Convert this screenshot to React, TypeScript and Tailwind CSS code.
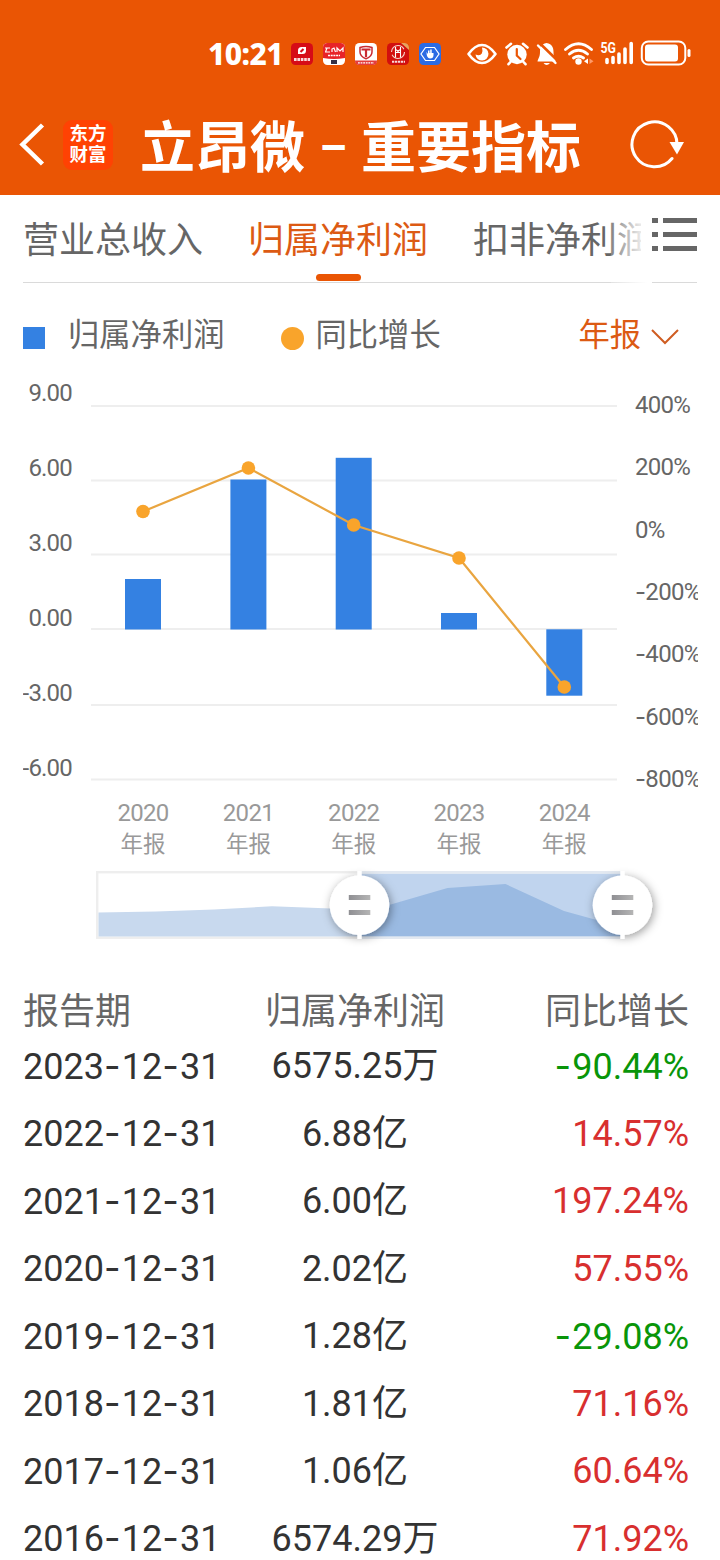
import React from 'react';

const ORANGE = '#ea5504';
const GRID = [406, 480.5, 554.5, 629, 705, 779.5];
const LEFT_TICKS = ['9.00', '6.00', '3.00', '0.00', '-3.00', '-6.00'];
const RIGHT_TICKS = ['400%', '200%', '0%', '-200%', '-400%', '-600%', '-800%'];

const BARS = [
    { year: '2020', x: 143, top: 579, bottom: 629.5, dot: 511.5 },
    { year: '2021', x: 248.4, top: 479.5, bottom: 629.5, dot: 468 },
    { year: '2022', x: 353.7, top: 457.8, bottom: 629.5, dot: 525 },
    { year: '2023', x: 459, top: 613, bottom: 629.5, dot: 558 },
    { year: '2024', x: 564.3, top: 629.3, bottom: 695.7, dot: 687 },
];

const ROWS = [
    { date: '2023-12-31', value: '6575.25万', growth: '-90.44%' },
    { date: '2022-12-31', value: '6.88亿', growth: '14.57%' },
    { date: '2021-12-31', value: '6.00亿', growth: '197.24%' },
    { date: '2020-12-31', value: '2.02亿', growth: '57.55%' },
    { date: '2019-12-31', value: '1.28亿', growth: '-29.08%' },
    { date: '2018-12-31', value: '1.81亿', growth: '71.16%' },
    { date: '2017-12-31', value: '1.06亿', growth: '60.64%' },
    { date: '2016-12-31', value: '6574.29万', growth: '71.92%' },
];

// Roboto's hyphen is too short next to the figures, so hyphens use Inter
const Num: React.FC<{ text: string }> = ({ text }) => (
    <>
        {text.split(/(-)/).map((part, i) =>
            part === '-' ? <span key={i} className="font-['Inter',sans-serif] tracking-[1.2px]">-</span> : part
        )}
    </>
);

const AppBadges = () => (
    <svg width="150" height="22" viewBox="0 0 150 22" className="ml-[9px]">
        <rect width="22" height="22" rx="4.5" fill="#d60b17" />
        <path d="M7 10V7.5Q7 4 10.5 4H15V7.5Q15 11 11.5 11H7Z" fill="#fff" />
        <path d="M9.5 9L12.5 6" stroke="#d60b17" strokeWidth="2.2" />
        <path d="M3 16.5H19" stroke="#fff" strokeWidth="3" strokeDasharray="2.6 0.8" opacity=".85" />

        <rect x="32" width="22" height="22" rx="4.5" fill="#fff" />
        <path d="M32 15V4.5A4.5 4.5 0 0 1 36.5 0H49.5A4.5 4.5 0 0 1 54 4.5V15Q43 17 32 15Z" fill="#e82328" />
        <path d="M34 5H39M34 9H39M36 5L34.5 9M41 9V6L43 5L44.5 9M46 9V5L49 8L52 5V9" stroke="#fff" strokeWidth="1.2" fill="none" />
        <path d="M37 12.5H49" stroke="#fff" strokeWidth="1.5" strokeDasharray="2 .7" />
        <path d="M40 17H46V21H40Z" fill="#343147" />

        <rect x="64" width="22" height="22" rx="4.5" fill="#fff" />
        <path d="M64 17.5H86V18A4 4 0 0 1 82 22H68A4 4 0 0 1 64 18Z" fill="#e43d3c" />
        <path d="M69 4.5Q75 2.5 81 4.5V9Q81 13.5 75 15.8Q69 13.5 69 9Z" stroke="#c92a32" strokeWidth="1.5" fill="none" />
        <path d="M70.5 6.5H79.5M75 6.5V14" stroke="#c92a32" strokeWidth="2.2" />
        <path d="M67 19.8H83" stroke="#fff" strokeWidth="1.3" strokeDasharray="1.8 .8" />

        <rect x="96" width="22" height="22" rx="4.5" fill="#d20f0e" />
        <path d="M110 0H113.5A4.5 4.5 0 0 1 118 4.5V7Z" fill="#e8a35c" />
        <circle cx="107" cy="9" r="6.5" stroke="#f6d4cb" strokeWidth="1.1" fill="none" strokeDasharray="17 3" />
        <path d="M104.5 4V14.5M109.5 4V14.5M104.5 9.5H109.5M104.5 6.5L109.5 9.5M109.5 6.5L104.5 9.5" stroke="#fff" strokeWidth="1.1" />
        <path d="M101 18.8H114" stroke="#fff" strokeWidth="2" strokeDasharray="2.3 .7" opacity=".85" />

        <rect x="128" width="22" height="22" rx="4.5" fill="#2b6be4" />
        <path d="M134.5 4.5H143.5L148 11L143.5 17.5H134.5L130 11Z" stroke="#fff" strokeWidth="1.2" fill="none" />
        <path d="M135.5 9L137 11V7.5H138.5V10H139.2V6.5H140.7V10H142.5V12Q142.5 15.5 139 15.5Q135.5 15 135.5 9Z" fill="#fff" />
    </svg>
);

const SystemIcons = () => (
    <svg width="226" height="30" viewBox="466 39 226 30" fill="none" stroke="#fff" className="ml-[25px]">
        {/* eye comfort */}
        <path d="M468.5 54Q475 45 482 45T495.500 54Q489 63 482 63T468.500 54Z" strokeWidth="2.6" strokeLinejoin="round" />
        <path d="M482 47.5A6.500 6.500 0 1 1 475.500 54.500Q480 56.500 481.800 53.500Q483 51 482 47.500Z" fill="#fff" stroke="none" />
        {/* alarm */}
        <circle cx="517" cy="54.5" r="9.7" fill="#fff" stroke="none" />
        <path d="M506.500 47.500L511 43.800M527.500 47.500L523 43.800M510.500 62L508.500 64.200M523.500 62L525.500 64.200" strokeWidth="2.6" strokeLinecap="round" />
        <path d="M516.8 49V55.500L520.500 59" stroke={ORANGE} strokeWidth="2.200" strokeLinecap="round" />
        {/* muted bell */}
        <path d="M546.500 43C541 44 540 48 540 52C540 57 538 58.500 537.500 61.500H556C555 58.500 553.500 57 553.500 52C553.500 48 552.500 44 546.500 43Z" fill="#fff" stroke="none" />
        <path d="M543.5 63H550Q546.500 67 543.500 63Z" fill="#fff" stroke="none" />
        <path d="M539 42.500L558.500 61.500" stroke={ORANGE} strokeWidth="2.600" />
        <path d="M538 45.500L555.500 63" strokeWidth="2.400" strokeLinecap="round" />
        {/* wifi */}
        <path d="M565.5 49.500Q578.500 38 591.500 49.500M569.500 54Q578.500 46.500 587.500 54M573.500 58Q578.500 54.500 583.500 58" strokeWidth="2.8" strokeLinecap="round" />
        <circle cx="578.500" cy="61.500" r="3.200" fill="#fff" stroke="none" />
        <path d="M588 58.500V64L584 61.200Z" fill="#fff" stroke="none" />
        <path d="M589.500 58.500V64L593.500 61.200Z" fill="#ff9a69" stroke="none" />
        {/* cellular */}
        <text x="600.500" y="53" fill="#fff" stroke="none" fontSize="15" fontWeight="700" textLength="15.500" lengthAdjust="spacingAndGlyphs">5G</text>
        <path d="M607 59.500V62.500M613 57.500V62.500M619 54V62.500M625 49V62.500M631.200 43.500V62.500" strokeWidth="3.600" strokeLinecap="round" />
        {/* battery */}
        <rect x="641.800" y="41.500" width="43.500" height="23" rx="6.500" strokeWidth="2" />
        <rect x="645" y="44.500" width="33" height="17" rx="3" fill="#fff" stroke="none" />
        <path d="M689 50.500V55.500" strokeWidth="3" strokeLinecap="round" />
    </svg>
);

const Header = () => (
    <header className="h-[195px] bg-[#ea5504] text-white">
        <div className="flex h-[95px] items-center pt-[13px] pl-[208px]">
            <span className="w-[74px] text-[30px] leading-[30px] font-extrabold">
                <span className="font-['Noto_Sans',sans-serif] tracking-[-0.6px]">10:21</span>
            </span>
            <AppBadges />
            <SystemIcons />
        </div>
        <div className="flex h-[100px] items-center">
            <svg width="26" height="44" viewBox="0 0 26 44" fill="none" stroke="#fff" strokeWidth="4.5" className="ml-[19px]">
                <path d="M23.500 2L3.500 21.500L23.500 41" />
            </svg>
            <div className="ml-[18px] flex h-[50px] w-[50px] flex-col items-center justify-center rounded-[9px] bg-[#ff4203] text-[18.5px] leading-[21.5px] font-bold">
                <span>东方</span>
                <span>财富</span>
            </div>
            <h1 className="mt-[6px] ml-[27px] flex w-[442px] text-[55px] leading-[80px] font-bold whitespace-pre">
                <span>立昂微</span>
                <span className="w-[56px] text-center text-[44px]">–</span>
                <span>重要指标</span>
            </h1>
            <svg width="56" height="50" viewBox="630 119 56 50" fill="none" className="-mt-[2px] ml-[48px]">
                <path d="M677 145A22.500 22.500 0 1 0 672 158.500" stroke="#fff" strokeWidth="3" strokeLinecap="round" />
                <path d="M669.500 142H684L677 154.500Z" fill="#fff" />
            </svg>
        </div>
    </header>
);

const Tabs = () => (
    <nav className="mx-[23px] flex h-[88px] text-[36px] text-[#666]">
        <div className="flex w-[630px] gap-[45px] border-b border-[#dadada] whitespace-nowrap">
            <span className="pt-[20px] leading-[52px]">营业总收入</span>
            <span className="flex flex-col items-center pt-[20px] leading-[52px] text-[#dc5a13]">
                归属净利润
                <span className="mt-[7px] h-[7px] w-[45px] shrink-0 rounded-full bg-[#ea5504]" />
            </span>
            <span className="w-[168px] shrink-0 overflow-hidden pt-[20px] leading-[52px]">扣非净利润</span>
        </div>
        {/* fade over the tab that is cut off */}
        <div className="z-10 -ml-[41px] h-full w-[36px] bg-linear-to-r from-white/20 to-white" />
        <div className="z-10 h-full w-[5px] bg-white" />
        <div className="flex w-[45px] border-b border-[#dadada] pt-[22px]">
            <svg width="45" height="35" viewBox="0 0 45 35" fill="#666">
                <path d="M0 1h6v5H0zM11 1h34v5H11zM0 15h6v5H0zM11 15h34v5H11zM0 29h6v5H0zM11 29h34v5H11z" />
            </svg>
        </div>
    </nav>
);

const Legend = () => (
    <div className="flex h-[92px] items-center px-[23px] pt-[13px] text-[31.3px] leading-[44px] text-[#666]">
        <span className="mt-[5px] h-[22px] w-[22px] bg-[#3481e2]" />
        <span className="ml-[23px]">归属净利润</span>
        <span className="mt-[5px] ml-[56px] h-[23px] w-[23px] rounded-full bg-[#f9a42b]" />
        <span className="ml-[12px]">同比增长</span>
        <span className="ml-auto text-[#dc5a13]">年报</span>
        <svg width="28" height="16" viewBox="0 0 28 16" fill="none" stroke="#cf5d22" strokeWidth="2" className="mt-[3px] mr-[18px] ml-[10px]">
            <path d="M1 1L14 14L27 1" />
        </svg>
    </div>
);

const Chart = () => (
    <svg width="675" height="485" viewBox="23 375 675 485" fontSize="24" fill="#666" className="mx-[23px] block">
        {GRID.map((y) => (
            <path key={y} d={`M91 ${y}H617`} stroke="#eee" strokeWidth="2.2" />
        ))}
        {LEFT_TICKS.map((t, i) => (
            <text key={t} x="72" y={401 + i * 75} textAnchor="end" letterSpacing="-0.8">{t}</text>
        ))}
        {RIGHT_TICKS.map((t, i) => (
            <text key={t} x="635" y={412.7 + i * 62.4} letterSpacing="-0.7">
                {t.startsWith('-') ? <tspan fontFamily="Inter">-</tspan> : null}
                {t.replace('-', '')}
            </text>
        ))}
        {BARS.map((b) => (
            <rect key={b.year} x={b.x - 18} y={b.top} width="36" height={b.bottom - b.top} fill="#3481e2" />
        ))}
        <polyline points={BARS.map((b) => `${b.x},${b.dot}`).join(' ')} fill="none" stroke="#e9a540" strokeWidth="2.2" />
        {BARS.map((b) => (
            <circle key={b.year} cx={b.x} cy={b.dot} r="6.8" fill="#f9a42b" />
        ))}
        {BARS.map((b) => (
            <g key={b.year} fill="#999" textAnchor="middle">
                <text x={b.x} y="821" letterSpacing="-0.7">{b.year}</text>
                <text x={b.x} y="852" fontSize="22.5">年报</text>
            </g>
        ))}
    </svg>
);

const RangeSlider = () => (
    <svg width="720" height="100" viewBox="0 860 720 100" className="block">
        <defs>
            <clipPath id="selected">
                <rect x="359.5" y="871" width="263" height="68" />
            </clipPath>
            <linearGradient id="grip">
                <stop stopColor="#8f8f93" />
                <stop offset="1" stopColor="#b5b5b5" />
            </linearGradient>
            <filter id="knob" x="-50%" y="-50%" width="200%" height="200%">
                <feDropShadow dx="1.5" dy="2" stdDeviation="5" floodColor="#000" floodOpacity=".4" />
            </filter>
        </defs>
        <rect x="97.2" y="872.2" width="525" height="65.5" fill="#fff" stroke="#eee" strokeWidth="2.4" />
        <path d="M98.5 936.5V912.5L156 911.5L214 909.5L272 906.3L331 908.5L389 905L447.5 888L505.5 884L564 911L622 927V936.5Z" fill="#c8d9ee" />
        <g clipPath="url(#selected)">
            <rect x="359" y="873.5" width="264" height="63" fill="#c0d4ee" />
            <path d="M359 936.5V907L389 905L447.5 888L505.5 884L564 911L622 927V936.5Z" fill="#9abae2" />
            <path d="M359 872.2H623M359 937.7H623" stroke="#e3e9f1" strokeWidth="2.4" />
        </g>
        {[359.5, 622.5].map((x) => (
            <g key={x}>
                <circle cx={x} cy="905.3" r="29.8" fill="#fff" filter="url(#knob)" />
                <path d={`M${x} 871V939`} stroke="#fff" strokeWidth="4.5" />
                <path d={`M${x - 10.7} 895h21.5v5h-21.5zM${x - 10.7} 910h21.5v5h-21.5z`} fill="url(#grip)" />
            </g>
        ))}
    </svg>
);

const DataTable = () => (
    <section className="mt-[28px] px-[23px] text-[36px] whitespace-nowrap">
        <div className="grid h-[44px] grid-cols-[200px_264px_1fr] items-center pt-[4px] leading-[40px] text-[#666]">
            <span>报告期</span>
            <span className="text-center">归属净利润</span>
            <span className="pr-[8px] text-right">同比增长</span>
        </div>
        {ROWS.map((row) => (
            <div key={row.date} className="grid h-[67.5px] grid-cols-[200px_264px_1fr] items-center pt-px leading-[60px] text-[#333]">
                <span><Num text={row.date} /></span>
                <span className="text-center"><Num text={row.value} /></span>
                <span className={`pr-[8px] text-right ${row.growth.startsWith('-') ? 'text-[#099509]' : 'text-[#d82f2f]'}`}>
                    <Num text={row.growth} />
                </span>
            </div>
        ))}
    </section>
);

export default function App() {
    return (
        <div className="h-[1560px] w-[720px] overflow-hidden bg-white font-['Roboto','Noto_Sans_CJK_SC',sans-serif]">
            <Header />
            <Tabs />
            <Legend />
            <Chart />
            <RangeSlider />
            <DataTable />
        </div>
    );
}
